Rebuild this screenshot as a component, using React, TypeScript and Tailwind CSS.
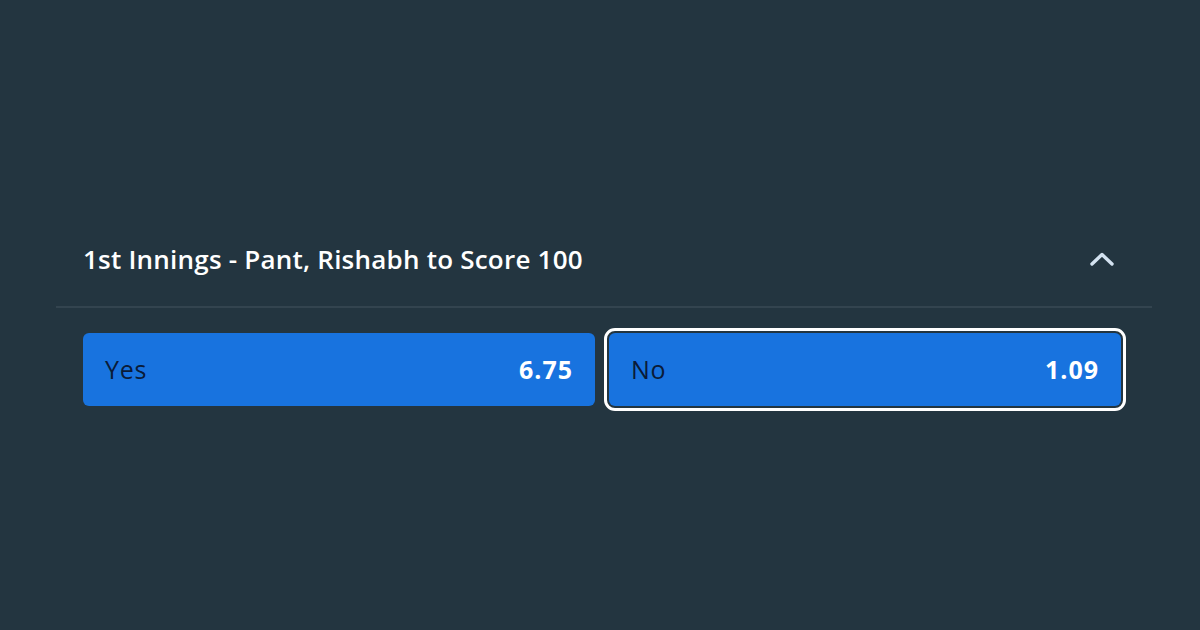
import React from "react";

const outcomes = [
  { label: "Yes", price: "6.75", selected: false },
  { label: "No", price: "1.09", selected: true },
];

const ChevronUp = () => (
  <svg width="26" height="16" viewBox="0 0 26 16" fill="none">
    <path
      d="M3 13 L13 3.5 L23 13"
      stroke="#d3e2f0"
      strokeWidth="3.4"
      strokeLinecap="round"
      strokeLinejoin="round"
    />
  </svg>
);

export default function App() {
  return (
    <div
      className="w-[1200px] h-[630px] bg-[#233540] pt-[236px]"
      style={{ fontFamily: "'Open Sans', Lato, sans-serif" }}
    >
      <div className="ml-[56px] mr-[48px]">
        {/* market header */}
        <div className="flex items-center justify-between h-[46px] pl-[27px] pr-[37px]">
          <h2 className="text-white text-[26px] font-semibold tracking-[0.22px]">
            1st Innings - Pant, Rishabh to Score 100
          </h2>
          <ChevronUp />
        </div>
        <div className="mt-[24px] h-[2px] bg-[#33444f]" />

        {/* outcomes */}
        <div className="grid grid-cols-2 gap-[14px] mt-[25px] ml-[27px] mr-[31px]">
          {outcomes.map((o) => (
            <button
              key={o.label}
              className={`h-[73px] rounded-[6px] bg-[#1873df] flex items-center justify-between px-[22px] ${
                o.selected
                  ? "outline-[3px] outline-solid outline-white outline-offset-[2px]"
                  : ""
              }`}
            >
              <span className="text-[#0a1b38] text-[25px] tracking-[0.7px]">{o.label}</span>
              <span className="text-white text-[25px] font-bold tracking-[1px]">{o.price}</span>
            </button>
          ))}
        </div>
      </div>
    </div>
  );
}
